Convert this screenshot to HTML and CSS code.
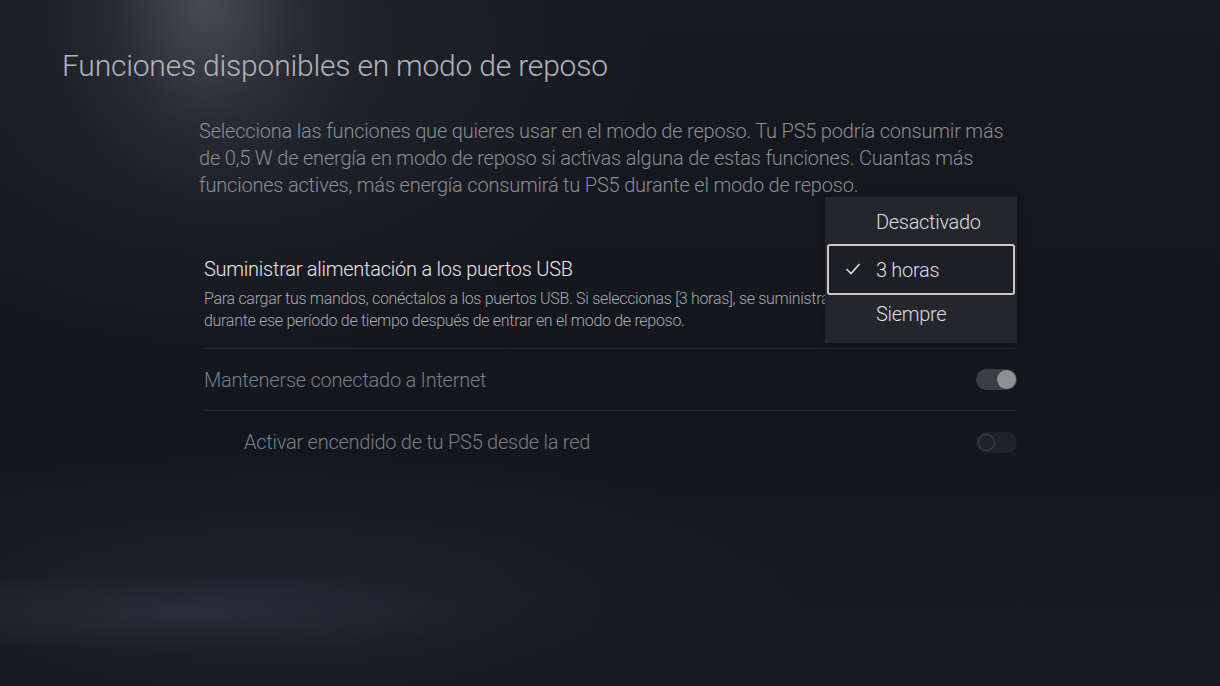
FILE: index.html
```html
<!DOCTYPE html>
<html lang="es">
<head>
  <meta charset="UTF-8">
  <title>Funciones disponibles en modo de reposo</title>
  <link rel="stylesheet" href="styles.css">
</head>
<body>

<div class="screen">
  <h1 class="title">Funciones disponibles en modo de reposo</h1>

  <div class="content">
    <p class="intro">Selecciona las funciones que quieres usar en el modo de reposo. Tu PS5 podría consumir más<br>de 0,5 W de energía en modo de reposo si activas alguna de estas funciones. Cuantas más<br>funciones actives, más energía consumirá tu PS5 durante el modo de reposo.</p>

    <div class="list">
      <div class="row row-usb">
        <div class="row-text">
          <div class="row-label">Suministrar alimentación a los puertos USB</div>
          <div class="row-desc">Para cargar tus mandos, conéctalos a los puertos USB. Si seleccionas [3 horas], se suministrará alimentación<br>durante ese período de tiempo después de entrar en el modo de reposo.</div>
        </div>

        <div class="dropdown">
          <div class="option first">Desactivado</div>
          <div class="option selected">
            <svg class="check" width="16" height="14" viewBox="0 0 16 14">
              <polyline points="1.5,7 6,11.5 14.5,2" fill="none" stroke="#dcdcdc" stroke-width="1.6"/>
            </svg>
            3 horas
          </div>
          <div class="option last">Siempre</div>
        </div>
      </div>

      <div class="row row-toggle">
        <div class="row-label dim">Mantenerse conectado a Internet</div>
        <span class="toggle on"><span class="knob"></span></span>
      </div>

      <div class="row row-toggle sub">
        <div class="row-label dim">Activar encendido de tu PS5 desde la red</div>
        <span class="toggle off"><span class="knob"></span></span>
      </div>
    </div>
  </div>
</div>

</body>
</html>
```

FILE: styles.css
```css
* {
  box-sizing: border-box;
}

html, body {
  margin: 0;
  padding: 0;
  background: #14171e;
}

body {
  font-family: Roboto, 'Open Sans', sans-serif;
  font-weight: 300;
}

.screen {
  position: relative;
  width: 1220px;
  height: 686px;
  overflow: hidden;
  background:
    radial-gradient(ellipse 160px 230px at 205px -10px, rgba(120, 124, 136, 0.45), rgba(80, 84, 96, 0.15) 60%, transparent 100%),
    radial-gradient(ellipse 420px 300px at 230px 60px, rgba(60, 64, 76, 0.35), transparent 100%),
    radial-gradient(ellipse 330px 40px at 180px 612px, rgba(60, 68, 82, 0.35), transparent 100%),
    radial-gradient(ellipse 520px 140px at 280px 590px, rgba(34, 42, 54, 0.6), transparent 100%),
    linear-gradient(180deg, #16191f 0%, #13161d 60%, #161a21 100%);
}

.title {
  margin: 0;
  padding: 46px 0 0 62px;
  font-size: 30px;
  line-height: 40px;
  font-weight: 300;
  color: #b2b4ba;
  letter-spacing: -0.2px;
}

.content {
  width: 818px;
  margin-left: 199px;
}

.intro {
  margin: 32px 0 0;
  font-size: 20px;
  line-height: 27px;
  color: #8b8e95;
  letter-spacing: -0.2px;
  white-space: nowrap;
}

.list {
  margin: 57px 0 0 5px;
}

.row {
  position: relative;
  display: flex;
  align-items: center;
  justify-content: space-between;
  border-bottom: 1px solid #262931;
}

.row-usb {
  padding-bottom: 16px;
}

.row-toggle {
  height: 62px;
}

.row-toggle.sub {
  padding-left: 40px;
  border-bottom: none;
}

.row-label {
  font-size: 20px;
  line-height: 26px;
  color: #e6e6e8;
  letter-spacing: -0.25px;
}

.row-label.dim {
  color: #7b7e85;
}

.row-text {
  width: 621px;
}

/* the first line runs on under the menu, so it is cut at its edge */
.row-desc {
  margin-top: 6px;
  width: 621px;
  overflow: hidden;
  font-size: 16px;
  line-height: 22px;
  color: #a9abb0;
  letter-spacing: -0.3px;
  white-space: nowrap;
}

/* dropdown menu over the USB row */
.dropdown {
  position: absolute;
  left: 621px;
  top: -59px;
  width: 192px;
  height: 146px;
  padding: 2px 2px;
  background: #24262c;
  box-shadow: 0 0 8px rgba(0, 0, 0, 0.3);
  display: flex;
  flex-direction: column;
}

.option {
  display: flex;
  align-items: center;
  padding-left: 49px;
  font-size: 20px;
  color: #dddee0;
  letter-spacing: -0.3px;
}

.option.first {
  height: 45px;
}

.option.last {
  height: 38px;
}

.option.selected {
  position: relative;
  height: 51px;
  border: 2px solid #c9c9cb;
  border-radius: 3px;
  background: #1d1f25;
  padding-left: 47px;
}

.check {
  position: absolute;
  left: 16px;
  top: 16px;
}

/* toggles */
.toggle {
  position: relative;
  width: 41px;
  height: 21px;
  border-radius: 11px;
}

.toggle.on {
  background: #3b3d43;
}

.toggle.on .knob {
  position: absolute;
  right: 1px;
  top: 1px;
  width: 19px;
  height: 19px;
  border-radius: 50%;
  background: #8e9094;
}

.toggle.off {
  background: #1f2228;
}

.toggle.off .knob {
  position: absolute;
  left: 2px;
  top: 2px;
  width: 17px;
  height: 17px;
  border-radius: 50%;
  border: 1.5px solid #44474d;
}
```
